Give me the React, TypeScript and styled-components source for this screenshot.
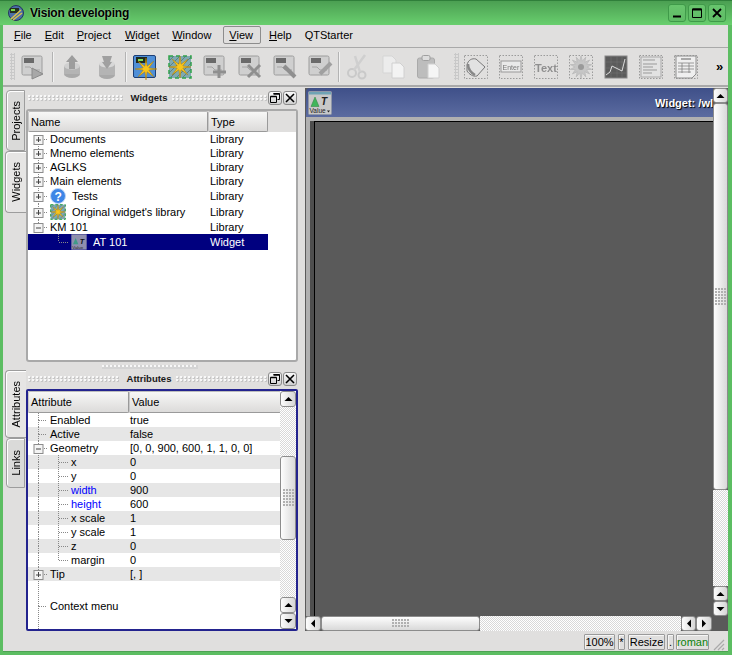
import React from "react";
import styled, { createGlobalStyle } from "styled-components";

const Global = createGlobalStyle`
  html, body { margin: 0; padding: 0; background: #e0dfde; }
  #root { width: 732px; height: 655px; overflow: hidden; }
  * { box-sizing: border-box; }
`;

const Win = styled.div`
  width: 732px; height: 655px; display: flex; flex-direction: column;
  border-style: solid; border-color: #5cbd62; border-width: 0 4px 3px 3px;
  background: #e0dfde; font: 11px "Liberation Sans", Arial, sans-serif; color: #000;
  box-shadow: inset 0 -1px 0 #4da253;
`;
const TitleBar = styled.div`
  height: 25px; margin: 0 -4px 0 -3px; padding: 0 6px 0 8px; display: flex; align-items: center; flex: none;
  background: linear-gradient(#4b9f52, #69cf6e); border-top: 1px solid #2f7f3a;
`;
const TitleText = styled.div`
  margin-left: 6px; font-weight: bold; font-size: 12px; flex: 1; color: #000; text-shadow: 0 0 2px #b5e8b5; letter-spacing: -0.2px;
`;
const TitleBtn = styled.div`
  width: 18px; height: 18px; margin-left: 2px; border: 1px solid #3f9a49; border-radius: 3px;
  background: linear-gradient(#68c56d, #5fbc65); display: flex; align-items: center; justify-content: center;
`;
const MenuBar = styled.div`
  height: 23px; flex: none; display: flex; align-items: center; padding-left: 4px; border-bottom: 1px solid #a9a9a9; padding-bottom: 2px;
`;
const MenuItem = styled.div<{ $on?: boolean; $mr?: number }>`
  height: 18px; padding: ${(p) => (p.$on ? "0 7px 0 5px" : "0 6px")}; line-height: 16px; margin-right: ${(p) => p.$mr ?? 0}px;
  border: 1px solid ${(p) => (p.$on ? "#8d8d8d" : "transparent")}; border-radius: 2px; font-size: 11px;
  u { text-decoration: underline; text-underline-offset: 1px; }
`;
const ToolBar = styled.div`
  height: 39px; flex: none; display: flex; align-items: center; padding-left: 7px; border-bottom: 2px solid #a9a9a9;
`;
const Grip = styled.div<{ $ml?: number; $mr?: number }>`
  width: 5px; height: 27px; margin: 0 ${(p) => p.$mr ?? 0}px 1px ${(p) => p.$ml ?? 0}px; flex: none;
  background: #c8c8c8;
  -webkit-mask: radial-gradient(circle, #000 1.2px, transparent 1.3px) 0 0 / 3px 3px;
`;
const ToolBtn = styled.div`
  width: 35px; height: 35px; flex: none; display: flex; align-items: center; justify-content: center;
`;
const ToolSep = styled.div<{ $l: number; $r: number }>`
  width: 1px; height: 30px; background: #b3b3b3; box-shadow: 1px 0 0 #f2f2f2; flex: none;
  margin: 0 ${(p) => p.$r}px 0 ${(p) => p.$l}px;
`;
const IconArt = styled.svg<{ $dim?: boolean }>`
  width: 24px; height: 24px; display: block; flex: none; overflow: visible;
  ${(p) => p.$dim && "filter: blur(0.35px);"}
`;
const More = styled.div`
  margin-left: 13px; font-weight: bold; font-size: 13px; line-height: 12px;
`;
const Main = styled.div`
  flex: 1; min-height: 0; display: flex;
`;
const LeftCol = styled.div`
  width: 297px; flex: none; display: flex; flex-direction: column;
`;
const DockRow = styled.div<{ $h: number }>`
  height: ${(p) => p.$h}px; flex: none; display: flex;
`;
const Tabs = styled.div<{ $top: number }>`
  width: 23px; flex: none; display: flex; flex-direction: column; align-items: flex-end; padding-top: ${(p) => p.$top}px;
`;
const Tab = styled.div<{ $on?: boolean; $h: number }>`
  height: ${(p) => p.$h}px; width: ${(p) => (p.$on ? 21 : 19)}px; flex: none; display: flex; align-items: center; justify-content: center;
  border: 1px solid #9d9d9d; border-right: ${(p) => (p.$on ? "none" : "1px solid #9d9d9d")}; border-radius: 4px 0 0 4px;
  background: ${(p) => (p.$on ? "#e6e5e4" : "#dadad9")}; box-shadow: inset 1px 1px 0 #fff;
  margin-right: ${(p) => (p.$on ? 0 : 1)}px;
  span { writing-mode: vertical-rl; transform: rotate(180deg); font-size: 11px; }
`;
const Dock = styled.div<{ $top: number; $bottom: number }>`
  width: 274px; flex: none; display: flex; flex-direction: column;
  padding: ${(p) => p.$top}px 2px ${(p) => p.$bottom}px 0;
`;
const DockHead = styled.div<{ $mb: number }>`
  height: 15px; display: flex; align-items: center; flex: none; margin-bottom: ${(p) => p.$mb}px; padding: 0 1px 0 2px;
`;
const DockDots = styled.div`
  flex: 1; height: 6px;
  background: radial-gradient(circle at 1px 1px, #f8f8f8 1px, transparent 1.2px) 0 0 / 4px 3px,
    radial-gradient(circle at 2px 2px, #c6c6c6 0.8px, transparent 1px) 0 0 / 4px 3px;
`;
const DockTitle = styled.div`
  font-weight: bold; font-size: 9.5px; margin: 0 5px 0 8px; color: #1a1a1a;
`;
const DockBtn = styled.div`
  width: 14px; height: 14px; margin-left: 1px; border: 1px solid #8b8b8b; border-radius: 3px; flex: none;
  display: flex; align-items: center; justify-content: center;
  background: linear-gradient(#fafafa, #d0d0d0);
`;
const Splitter = styled.div`
  height: 6px; flex: none; display: flex; justify-content: center; align-items: center; padding-left: 23px;
`;
const SplitDots = styled.div`
  width: 96px; height: 4px; margin-left: -26px;
  background: radial-gradient(circle at 1px 1px, #f8f8f8 1px, transparent 1.2px) 0 0 / 4px 4px, #d4d4d4;
`;
const TreeBox = styled.div<{ $focus?: boolean }>`
  flex: 1; min-height: 0; display: flex; overflow: hidden; background: #fff;
  border: 2px solid ${(p) => (p.$focus ? "#23238e" : "#a9a9a9")};
  border-radius: ${(p) => (p.$focus ? "2px" : "3px")};
`;
const TreeInner = styled.div`
  flex: 1; min-width: 0; display: flex; flex-direction: column; overflow: hidden;
`;
const HeadRow = styled.div<{ $h: number }>`
  height: ${(p) => p.$h}px; display: flex; flex: none; background: #e0dfde;
`;
const HeadCell = styled.div<{ $w: number }>`
  width: ${(p) => p.$w}px; flex: none; padding-left: 2px; display: flex; align-items: center; font-size: 11px;
  background: linear-gradient(#f7f7f6, #dcdbda); border: 1px solid #9a9a9a; border-radius: 2px; border-left-color: #c8c8c8; border-top-color: #bdbdbd;
`;
const Rows = styled.div<{ $w?: number }>`
  display: flex; flex-direction: column; flex: none; width: ${(p) => (p.$w ? `${p.$w}px` : "auto")};
`;
const Row = styled.div<{ $h?: number; $alt?: boolean; $sel?: boolean }>`
  height: ${(p) => p.$h ?? 14}px; flex: none; display: flex; align-items: center;
  background: ${(p) => (p.$sel ? "#00007f" : p.$alt ? "#e6e6e6" : "transparent")};
  color: ${(p) => (p.$sel ? "#fff" : "#000")};
`;
const NameCell = styled.div<{ $w: number; $blue?: boolean }>`
  width: ${(p) => p.$w}px; flex: none; display: flex; align-items: center; align-self: stretch; white-space: nowrap;
  color: ${(p) => (p.$blue ? "#0000ff" : "inherit")};
`;
const ValCell = styled.div<{ $pad: number }>`
  padding-left: ${(p) => p.$pad}px; white-space: nowrap;
`;
const Guide = styled.svg`
  flex: none; display: block; align-self: stretch; height: 100%;
`;
const RowIcon = styled.svg`
  width: 16px; height: 16px; flex: none; margin: 0 6px 0 0; display: block;
`;
const VBar = styled.div<{ $w: number }>`
  width: ${(p) => p.$w}px; flex: none; display: flex; flex-direction: column;
`;
const HBar = styled.div`
  height: 15px; flex: none; display: flex;
`;
const ArrowBtn = styled.div<{ $h?: number; $w?: number }>`
  width: ${(p) => p.$w ?? 16}px; height: ${(p) => p.$h ?? 16}px; flex: none; display: flex; align-items: center; justify-content: center;
  border: 1px solid #8c8c8c; border-radius: 3px; background: linear-gradient(90deg, #fdfdfd, #d6d6d6);
`;
const Checker = styled.div<{ $len?: number }>`
  flex: ${(p) => (p.$len ? `0 0 ${p.$len}px` : 1)}; min-width: 0; min-height: 0;
  background: repeating-conic-gradient(#ffffff 0 25%, #d8d8d8 0 50%) 0 0 / 2px 2px;
`;
const Slider = styled.div<{ $horizontal?: boolean; $len: number }>`
  flex: 0 0 ${(p) => p.$len}px; display: flex; align-items: center; justify-content: center;
  border: 1px solid #8c8c8c; border-radius: 3px;
  background: linear-gradient(${(p) => (p.$horizontal ? "180deg" : "90deg")}, #fdfdfd, #d9d9d9);
`;
const SliderGrip = styled.div<{ $w: number; $h: number }>`
  width: ${(p) => p.$w}px; height: ${(p) => p.$h}px;
  background: radial-gradient(circle at 1px 1px, #b0b0b0 0.9px, transparent 1px) 0 0 / 3px 3px;
`;
const Mdi = styled.div`
  flex: 1; min-width: 0; display: flex; flex-direction: column; background: #5a5a5a; margin-left: 5px; margin-top: 1px;
`;
const MdiTop = styled.div`
  flex: 1; min-height: 0; display: flex;
`;
const SubWin = styled.div`
  flex: 1; min-width: 0; display: flex; flex-direction: column; margin-left: 1px; border-top-left-radius: 4px; overflow: hidden;
`;
const SubTitle = styled.div`
  height: 29px; flex: none; display: flex; align-items: center; padding-left: 2px; white-space: nowrap;
  background: linear-gradient(#3f5089, #5b6ba0);
`;
const SubText = styled.div`
  font-weight: bold; font-size: 11px; color: #fff; text-shadow: 1px 1px 1px #000; margin-left: auto;
`;
const SubBody = styled.div`
  flex: 1; min-height: 0; display: flex; flex-direction: column; border-top: 4px solid #b0b0b0; background: #b0b0b0;
`;
const SubCanvas = styled.div`
  flex: 1; border-top: 1px solid #000; border-left: 1px solid #000; background: #5a5a5a; margin-left: 8px;
  box-shadow: -4px 0 0 #4e4e4e;
`;
const Corner = styled.div`
  width: 16px; flex: none; background: #5a5a5a;
`;
const Status = styled.div`
  height: 21px; flex: none; display: flex; align-items: center; padding: 0 0 0 581px;
`;
const StatusBox = styled.div<{ $w: number; $green?: boolean; $mr?: number }>`
  width: ${(p) => p.$w}px; height: 16px; flex: none; margin-right: ${(p) => p.$mr ?? 2}px; display: flex; align-items: center; justify-content: center;
  border: 1px solid #9a9a9a; border-radius: 1px; box-shadow: inset 1px 1px 0 #f5f5f5;
  color: ${(p) => (p.$green ? "#0a820a" : "#000")}; font-size: 11px;
`;
const SizeGrip = styled.svg`
  width: 14px; height: 14px; margin: 5px 0 0 2px; flex: none; display: block;
`;
const LogoArt = styled.svg`
  flex: none; display: block;
`;

const starPts = (cx: number, cy: number, r: number, ri: number, n = 8) => {
  const out: string[] = [];
  for (let i = 0; i < n * 2; i++) {
    const a = (Math.PI * i) / n;
    const rr = i % 2 ? ri : r;
    out.push(`${(cx + rr * Math.sin(a)).toFixed(1)},${(cy - rr * Math.cos(a)).toFixed(1)}`);
  }
  return out.join(" ");
};

const Sheet = () => (
  <>
    <rect x="1" y="1" width="20" height="19" rx="1.5" fill="#cfcfcf" stroke="#9c9c9c" />
    <rect x="3" y="3" width="10" height="5" fill="#6a6a6a" />
    <path d="M4 12h5l3 3h7" fill="none" stroke="#a5a5a5" />
  </>
);

const Frame = () => (
  <rect x="0.5" y="0.5" width="23" height="23" fill="none" stroke="#9b9b9b" strokeDasharray="1.5 1.5" />
);

const icons: Record<string, React.ReactNode> = {
  play: (<><Sheet /><path d="M11 13l11 6-11 5z" fill="#a8a8a8" stroke="#8a8a8a" /></>),
  up: (<>
    <ellipse cx="12" cy="19" rx="8" ry="4" fill="#a9a9a9" /><rect x="4" y="11" width="16" height="8" fill="#b4b4b4" />
    <ellipse cx="12" cy="11" rx="8" ry="3.5" fill="#d0d0d0" /><path d="M12 0l6 7h-3v7H9V7H6z" fill="#9d9d9d" />
  </>),
  down: (<>
    <ellipse cx="12" cy="20" rx="8" ry="4" fill="#a9a9a9" /><rect x="4" y="9" width="16" height="11" fill="#b4b4b4" />
    <ellipse cx="12" cy="9" rx="8" ry="3.5" fill="#d8d8d8" /><path d="M7 1h10l-2 6h2l-5 7-5-7h2z" fill="#a0a0a0" />
  </>),
  newlib: (<>
    <rect x="0.5" y="0.5" width="22" height="22" rx="1.5" fill="#4f8fd8" stroke="#1d3f75" />
    <rect x="3" y="2" width="11" height="6" fill="#1f2a1f" /><rect x="5" y="4" width="5" height="2" fill="#7fe05a" />
    <polygon points={starPts(13, 14, 11, 3)} fill="#f7c51c" stroke="#b07a00" strokeWidth="0.5" />
  </>),
  newlib2: (<>
    <rect x="1" y="1" width="22" height="22" fill="#7faab0" stroke="#2fa44a" strokeDasharray="4 3" strokeWidth="1.5" />
    <path d="M1 6l5-5M1 12l11-11M1 18L18 1M3 22L23 2M9 22l14-14M15 22l8-8" stroke="#4b6f75" strokeWidth="0.7" />
    <polygon points={starPts(12, 12, 11, 3)} fill="#f7c51c" stroke="#b07a00" strokeWidth="0.5" />
  </>),
  add: (<><Sheet /><path d="M16 10v13M10 17h13" stroke="#8f8f8f" strokeWidth="3" /></>),
  del: (<><Sheet /><path d="M10 10l12 12M22 10L10 22" stroke="#8f8f8f" strokeWidth="3" /></>),
  tool: (<><Sheet /><path d="M11 11l11 11" stroke="#8f8f8f" strokeWidth="4" /></>),
  pen: (<><Sheet /><path d="M12 19L23 8" stroke="#a0a0a0" strokeWidth="4" /></>),
  cut: (<>
    <circle cx="5" cy="18" r="4" fill="none" stroke="#c9c9c9" strokeWidth="2" /><circle cx="15" cy="20" r="3.5" fill="none" stroke="#c9c9c9" strokeWidth="2" />
    <path d="M7 15L18 0M13 17L8 1" stroke="#cfcfcf" strokeWidth="2.5" />
  </>),
  copy: (<>
    <path d="M1 1h9l4 4v13H1z" fill="#ececec" stroke="#d5d5d5" /><path d="M10 8h8l4 4v11H10z" fill="#f3f3f3" stroke="#d0d0d0" />
  </>),
  paste: (<>
    <rect x="0.5" y="3" width="17" height="20" rx="2" fill="#bdbdbd" stroke="#aaa" /><rect x="5" y="0.5" width="8" height="5" rx="1.5" fill="#ddd" stroke="#9f9f9f" />
    <path d="M11 9h7l4 4v10H11z" fill="#f5f5f5" stroke="#d0d0d0" />
  </>),
  elf: (<>
    <Frame /><path d="M3 10c1-5 5-7 9-6l9 8-8 9c-4 1-8-2-10-5z" fill="#e2e2e2" stroke="#777" />
    <path d="M4 9c0 4 2 8 7 11" fill="none" stroke="#888" strokeWidth="2.5" />
  </>),
  enter: (<>
    <Frame /><rect x="2" y="6" width="20" height="11" fill="#e9e9e9" stroke="#999" />
    <text x="3.5" y="14.5" fontSize="7" fontFamily="Liberation Sans" fill="#777">Enter</text>
  </>),
  text: (<>
    <Frame /><text x="1" y="16.5" fontSize="11" fontWeight="bold" fontFamily="Liberation Sans" fill="#8f8f8f">Text</text>
  </>),
  gauge: (<>
    <Frame /><polygon points={starPts(12, 12, 11, 6, 14)} fill="#c6c6c6" stroke="#bdbdbd" /><circle cx="12" cy="12" r="3" fill="#9a9a9a" />
  </>),
  chart: (<>
    <rect x="1" y="1" width="22" height="22" fill="#5b5b5b" stroke="#888" />
    <path d="M1 7h22M1 13h22M1 18h22M7 1v22M13 1v22M18 1v22" stroke="#777" strokeWidth="0.5" />
    <path d="M2 20l4-3 2-6 6 3 4 2 3-12" fill="none" stroke="#ddd" />
  </>),
  doc: (<>
    <Frame /><rect x="2" y="2" width="20" height="20" fill="#e2e2e2" stroke="#aaa" />
    <path d="M4 5h12M4 9h14M4 12h10M4 15h14M4 18h9" stroke="#999" />
  </>),
  table: (<>
    <Frame /><path d="M2 1h20v18l-4 4H2z" fill="#efefef" stroke="#8e8e8e" />
    <path d="M7 4h10" stroke="#777" strokeWidth="1.2" />
    <path d="M4 8h16M4 11h16M4 14h16M4 17h13M8 8v10M15 8v10" stroke="#777" strokeWidth="0.7" />
  </>),
};

const Tool = ({ name, dim = true }: { name: string; dim?: boolean }) => (
  <ToolBtn>
    <IconArt $dim={dim} viewBox="0 0 24 24">{icons[name]}</IconArt>
  </ToolBtn>
);

const AppLogo = () => (
  <LogoArt width="16" height="16" viewBox="0 0 16 16">
    <circle cx="8" cy="8" r="7.5" fill="#4a6ea8" stroke="#26365c" />
    <rect x="2" y="3" width="9" height="5" fill="#24301f" /><rect x="3" y="4" width="4" height="2" fill="#78d84a" />
    <path d="M3 14L13 5M5 15l9-7" stroke="#d9c24c" strokeWidth="1.5" />
  </LogoArt>
);

const ValueIcon = () => (
  <LogoArt width="24" height="24" viewBox="0 0 24 24">
    <rect x="0.5" y="0.5" width="23" height="23" rx="1" fill="#c8c8c8" stroke="#8f97a8" />
    <rect x="1" y="1" width="22" height="2.5" fill="#6fa3b4" />
    <path d="M3 15.5L7 6l4 9.5z" fill="#3fb65a" stroke="#2a7a40" strokeWidth="0.5" />
    <text x="13" y="14" fontSize="10" fontWeight="bold" fontStyle="italic" fontFamily="Liberation Sans" fill="#222">T</text>
    <text x="1.5" y="21.5" fontSize="6.5" fontFamily="Liberation Sans" fill="#222">Value</text>
    <path d="M19 19.5h3l-1.5 2z" fill="#222" />
  </LogoArt>
);

const Arrow = ({ d }: { d: "u" | "d" | "l" | "r" }) => {
  const p = { u: "M0.5 5L4.5 1l4 4z", d: "M0.5 1h8l-4 4z", l: "M5 0.5v8L1 4.5z", r: "M1 0.5v8l4-4z" }[d];
  const horizontal = d === "u" || d === "d";
  return (
    <svg width={horizontal ? 9 : 6} height={horizontal ? 6 : 9}>
      <path d={p} fill="#000" />
    </svg>
  );
};

const TreeGuide = ({
  level, exp, h = 14, up = true, down = true, branchDown = false,
}: { level: 1 | 2; exp?: "+" | "-"; h?: number; up?: boolean; down?: boolean; branchDown?: boolean }) => {
  const m = h / 2;
  const w = level === 1 ? 22 : 43;
  const dash = "1 1";
  return (
    <Guide width={w} viewBox={`0 0 ${w} ${h}`} preserveAspectRatio="xMinYMin">
      {up && <line x1="10.5" y1="0" x2="10.5" y2={exp ? m - 4 : m} stroke="#888" strokeDasharray={dash} />}
      {down && <line x1="10.5" y1={exp ? m + 5 : m} x2="10.5" y2={h} stroke="#888" strokeDasharray={dash} />}
      {level === 1 && <line x1={exp ? 16 : 11} y1={m + 0.5} x2="19" y2={m + 0.5} stroke="#888" strokeDasharray={dash} />}
      {exp && (
        <>
          <rect x="6" y={Math.floor(m) - 4 + 0.5} width="9" height="9" fill="#f4f4f4" stroke="#8c8c8c" />
          <line x1="8" y1={Math.floor(m) + 1} x2="13" y2={Math.floor(m) + 1} stroke="#444" />
          {exp === "+" && <line x1="10.5" y1={Math.floor(m) - 2} x2="10.5" y2={Math.floor(m) + 3} stroke="#444" />}
        </>
      )}
      {level === 2 && (
        <>
          <line x1="30.5" y1="0" x2="30.5" y2={branchDown ? h : m} stroke="#888" strokeDasharray={dash} />
          <line x1="31" y1={m + 0.5} x2="40" y2={m + 0.5} stroke="#888" strokeDasharray={dash} />
        </>
      )}
    </Guide>
  );
};

const DockButtons = () => (
  <>
    <DockBtn>
      <svg width="10" height="10"><path d="M3.5.5h6v6h-2M.5 3.5h6v6h-6z" fill="none" stroke="#000" /><path d="M.5 3.5h6M3.5 1h6" stroke="#000" strokeWidth="1.5" /></svg>
    </DockBtn>
    <DockBtn>
      <svg width="10" height="10"><path d="M1 1l8 8M9 1L1 9" stroke="#000" strokeWidth="1.6" /></svg>
    </DockBtn>
  </>
);

const widgets: { name: string; icon?: "q" | "star"; h?: number; exp: "+" | "-" }[] = [
  { name: "Documents", exp: "+" },
  { name: "Mnemo elements", exp: "+" },
  { name: "AGLKS", exp: "+" },
  { name: "Main elements", exp: "+" },
  { name: "Tests", icon: "q", h: 16, exp: "+" },
  { name: "Original widget's library", icon: "star", h: 16, exp: "+" },
  { name: "KM 101", exp: "-" },
];

const attrs: { n: string; v: string; lv: 1 | 2; exp?: "+" | "-"; blue?: boolean }[] = [
  { n: "Enabled", v: "true", lv: 1 },
  { n: "Active", v: "false", lv: 1 },
  { n: "Geometry", v: "[0, 0, 900, 600, 1, 1, 0, 0]", lv: 1, exp: "-" },
  { n: "x", v: "0", lv: 2 },
  { n: "y", v: "0", lv: 2 },
  { n: "width", v: "900", lv: 2, blue: true },
  { n: "height", v: "600", lv: 2, blue: true },
  { n: "x scale", v: "1", lv: 2 },
  { n: "y scale", v: "1", lv: 2 },
  { n: "z", v: "0", lv: 2 },
  { n: "margin", v: "0", lv: 2 },
  { n: "Tip", v: "[, ]", lv: 1, exp: "+" },
];

export default function App() {
  return (
    <Win>
      <Global />
      <TitleBar>
        <AppLogo />
        <TitleText>Vision developing</TitleText>
        <TitleBtn><svg width="10" height="10"><path d="M1 8.5h8" stroke="#000" strokeWidth="2" /></svg></TitleBtn>
        <TitleBtn><svg width="10" height="10"><path d="M.5 1h9v8.5h-9z" fill="none" stroke="#000" /><path d="M.5 1.5h9" stroke="#000" strokeWidth="2" /></svg></TitleBtn>
        <TitleBtn><svg width="10" height="10"><path d="M1 1l8 8M9 1L1 9" stroke="#000" strokeWidth="1.8" /></svg></TitleBtn>
      </TitleBar>
      <MenuBar>
        <MenuItem $mr={-1}><u>F</u>ile</MenuItem>
        <MenuItem $mr={-1}><u>E</u>dit</MenuItem>
        <MenuItem><u>P</u>roject</MenuItem>
        <MenuItem $mr={-1}><u>W</u>idget</MenuItem>
        <MenuItem $mr={5}><u>W</u>indow</MenuItem>
        <MenuItem $on $mr={1}><u>V</u>iew</MenuItem>
        <MenuItem $mr={-1}><u>H</u>elp</MenuItem>
        <MenuItem>QTStarter</MenuItem>
      </MenuBar>
      <ToolBar>
        <Grip />
        <Tool name="play" />
        <ToolSep $l={2} $r={1} />
        <Tool name="up" /><Tool name="down" />
        <ToolSep $l={1} $r={1} />
        <Tool name="newlib" dim={false} /><Tool name="newlib2" dim={false} />
        <Tool name="add" /><Tool name="del" /><Tool name="tool" /><Tool name="pen" />
        <ToolSep $l={1} $r={2} />
        <Tool name="cut" /><Tool name="copy" /><Tool name="paste" />
        <Grip $ml={8} $mr={-1} />
        <Tool name="elf" /><Tool name="enter" /><Tool name="text" /><Tool name="gauge" />
        <Tool name="chart" /><Tool name="doc" /><Tool name="table" />
        <More>»</More>
      </ToolBar>
      <Main>
        <LeftCol>
          <DockRow $h={277}>
            <Tabs $top={3}>
              <Tab $h={61}><span>Projects</span></Tab>
              <Tab $on $h={62}><span>Widgets</span></Tab>
            </Tabs>
            <Dock $top={3} $bottom={2}>
              <DockHead $mb={4}>
                <DockDots /><DockTitle>Widgets</DockTitle><DockDots /><DockButtons />
              </DockHead>
              <TreeBox>
                <TreeInner>
                  <HeadRow $h={21}>
                    <HeadCell $w={180}>Name</HeadCell>
                    <HeadCell $w={60}>Type</HeadCell>
                  </HeadRow>
                  <Rows $w={240}>
                    {widgets.map((w, i) => (
                      <Row key={w.name} $h={w.h}>
                        <NameCell $w={182}>
                          <TreeGuide level={1} exp={w.exp} h={w.h ?? 14} up={i > 0} down={i < 6} />
                          {w.icon === "q" && (
                            <RowIcon viewBox="0 0 16 16">
                              <circle cx="8" cy="8" r="7.5" fill="#3d86e6" stroke="#bcd3f5" />
                              <text x="4.5" y="12.5" fontSize="12" fontWeight="bold" fontFamily="Liberation Sans" fill="#fff">?</text>
                            </RowIcon>
                          )}
                          {w.icon === "star" && (
                            <RowIcon viewBox="0 0 24 24">{icons.newlib2}</RowIcon>
                          )}
                          {w.name}
                        </NameCell>
                        <ValCell $pad={0}>Library</ValCell>
                      </Row>
                    ))}
                    <Row $sel $h={16}>
                      <NameCell $w={182}>
                        <TreeGuide level={2} h={16} up={false} down={false} />
                        <RowIcon viewBox="0 0 24 24">
                          <rect x="0.5" y="0.5" width="23" height="23" fill="#8f8fae" />
                          <path d="M3 15.5L7 6l4 9.5z" fill="#3f9a88" />
                          <text x="13" y="15" fontSize="11" fontWeight="bold" fontStyle="italic" fontFamily="Liberation Sans" fill="#111">T</text>
                          <text x="2" y="22" fontSize="6.5" fontFamily="Liberation Sans" fill="#222">Value</text>
                        </RowIcon>
                        AT 101
                      </NameCell>
                      <ValCell $pad={0}>Widget</ValCell>
                    </Row>
                  </Rows>
                </TreeInner>
              </TreeBox>
            </Dock>
          </DockRow>
          <Splitter><SplitDots /></Splitter>
          <DockRow $h={261}>
            <Tabs $top={0}>
              <Tab $on $h={68}><span>Attributes</span></Tab>
              <Tab $h={50}><span>Links</span></Tab>
            </Tabs>
            <Dock $top={1} $bottom={0}>
              <DockHead $mb={3}>
                <DockDots /><DockTitle>Attributes</DockTitle><DockDots /><DockButtons />
              </DockHead>
              <TreeBox $focus>
                <TreeInner>
                  <HeadRow $h={22}>
                    <HeadCell $w={101}>Attribute</HeadCell>
                    <HeadCell $w={152}>Value</HeadCell>
                  </HeadRow>
                  {attrs.map((a, i) => (
                    <Row key={a.n} $alt={i % 2 === 1}>
                      <NameCell $w={101} $blue={a.blue}>
                        <TreeGuide level={a.lv} exp={a.exp} branchDown={a.lv === 2 && a.n !== "margin"} />
                        {a.n}
                      </NameCell>
                      <ValCell $pad={1}>{a.v}</ValCell>
                    </Row>
                  ))}
                  <Row $h={50}>
                    <NameCell $w={101}>
                      <TreeGuide level={1} h={50} />
                      Context menu
                    </NameCell>
                  </Row>
                </TreeInner>
                <VBar $w={16}>
                  <ArrowBtn><Arrow d="u" /></ArrowBtn>
                  <Checker $len={49} />
                  <Slider $len={84}><SliderGrip $w={11} $h={18} /></Slider>
                  <Checker />
                  <ArrowBtn><Arrow d="u" /></ArrowBtn>
                  <ArrowBtn><Arrow d="d" /></ArrowBtn>
                </VBar>
              </TreeBox>
            </Dock>
          </DockRow>
        </LeftCol>
        <Mdi>
          <MdiTop>
            <SubWin>
              <SubTitle>
                <ValueIcon />
                <SubText>Widget: /wl</SubText>
              </SubTitle>
              <SubBody>
                <SubCanvas />
              </SubBody>
            </SubWin>
            <VBar $w={15}>
              <ArrowBtn $w={15} $h={15}><Arrow d="u" /></ArrowBtn>
              <Slider $len={387}><SliderGrip $w={11} $h={18} /></Slider>
              <Checker />
              <ArrowBtn $w={15} $h={15}><Arrow d="u" /></ArrowBtn>
              <ArrowBtn $w={15} $h={15}><Arrow d="d" /></ArrowBtn>
            </VBar>
          </MdiTop>
          <HBar>
            <ArrowBtn $w={16} $h={15}><Arrow d="l" /></ArrowBtn>
            <Slider $horizontal $len={159}><SliderGrip $w={18} $h={9} /></Slider>
            <Checker />
            <ArrowBtn $w={15} $h={15}><Arrow d="l" /></ArrowBtn>
            <ArrowBtn $w={16} $h={15}><Arrow d="r" /></ArrowBtn>
            <Corner />
          </HBar>
        </Mdi>
      </Main>
      <Status>
        <StatusBox $w={31} $mr={3}>100%</StatusBox>
        <StatusBox $w={7} $mr={3}>*</StatusBox>
        <StatusBox $w={37}>Resize</StatusBox>
        <StatusBox $w={7}>.</StatusBox>
        <StatusBox $w={33} $green $mr={0}>roman</StatusBox>
        <SizeGrip viewBox="0 0 14 14"><path d="M13 3L3 13M13 7l-6 6M13 11l-2 2" stroke="#aaa" strokeWidth="1.2" /></SizeGrip>
      </Status>
    </Win>
  );
}
